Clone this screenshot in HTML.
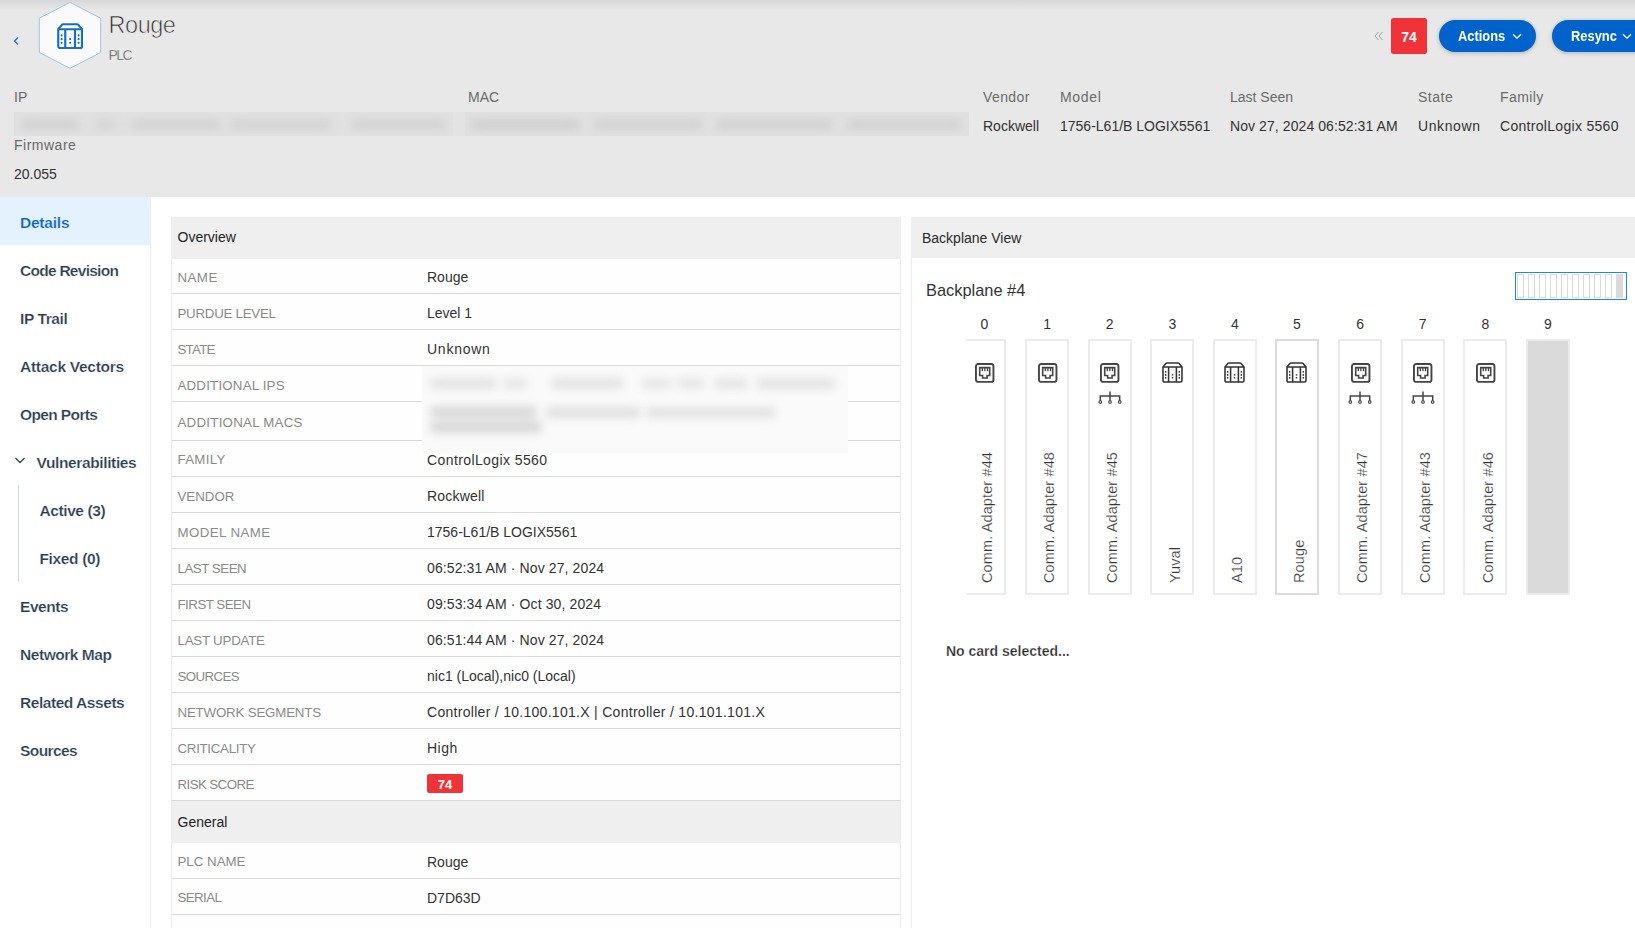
<!DOCTYPE html>
<html><head><meta charset="utf-8"><title>Rouge - PLC</title>
<style>
html,body{margin:0;padding:0;}
body{width:1635px;height:928px;overflow:hidden;position:relative;background:#fff;font-family:"Liberation Sans", sans-serif;}
.t{position:absolute;white-space:nowrap;}
</style></head><body>
<div style="position:absolute;left:0px;top:0px;width:1635px;height:197px;background:#e8e8e8"></div>
<div style="position:absolute;left:0px;top:0px;width:1635px;height:10px;background:linear-gradient(#d7d7d7,#e8e8e8)"></div>
<svg style="position:absolute;left:12px;top:35px" width="10" height="12" viewBox="0 0 10 12"><path d="M6 2.5 L2.5 6 L6 9.5" fill="none" stroke="#2a6fc9" stroke-width="1.4"/></svg>
<svg style="position:absolute;left:38px;top:1px" width="64" height="69" viewBox="0 0 64 69">
<polygon points="32,1.4 62.7,17.2 62.7,51.5 32,67.3 1.3,51.5 1.3,17.2" fill="#fafafa" stroke="#9fc4e2" stroke-width="1"/>
</svg>
<svg style="position:absolute;left:56.9px;top:22.8px" width="26.25" height="26.25" viewBox="0 0 21 21">
<g fill="none" stroke="#1a6ec0" stroke-width="1.75" stroke-linejoin="round">
<path d="M1 5 L3.9 1.5 Q4.3 1 5 1 L16 1 Q16.7 1 17.1 1.5 L20 5 L20 18.6 Q20 20 18.6 20 L2.4 20 Q1 20 1 18.6 Z"/>
<path d="M1 5 H20 M6.6 5 V20 M14.4 5 V20"/>
</g>
<g fill="#1a6ec0">
<circle cx="3.7" cy="9.85" r="0.85"/><circle cx="3.7" cy="12.9" r="0.85"/><circle cx="3.7" cy="15.85" r="0.85"/>
<circle cx="17.3" cy="9.85" r="0.85"/><circle cx="17.3" cy="12.9" r="0.85"/><circle cx="17.3" cy="15.85" r="0.85"/>
<rect x="9.75" y="12.2" width="1.5" height="1.4"/><rect x="9.75" y="15.15" width="1.5" height="1.4"/>
</g></svg>
<div class="t" style="left:108.6px;top:14.0px;font-size:23.5px;line-height:23.5px;color:#2e2e2e;font-weight:400;letter-spacing:-0.5px;-webkit-text-stroke:0.7px #e8e8e8">Rouge</div>
<div class="t" style="left:108.5px;top:48.1px;font-size:14px;line-height:14px;color:#555;font-weight:400;letter-spacing:-1.5px;-webkit-text-stroke:0.3px #e8e8e8">PLC</div>
<svg style="position:absolute;left:1374px;top:31px" width="10" height="10" viewBox="0 0 10 10"><path d="M4.5 1 L1 5 L4.5 9 M8.5 1 L5 5 L8.5 9" fill="none" stroke="#a0a0a0" stroke-width="1"/></svg>
<div style="position:absolute;left:1391px;top:18px;width:36px;height:36px;background:#ef3339;border-radius:2.5px"></div>
<div class="t" style="left:1391px;top:29.9px;font-size:14px;line-height:14px;color:#fff;font-weight:700;width:36px;text-align:center">74</div>
<div style="position:absolute;left:1439px;top:20px;width:97px;height:32px;background:#0063cb;border-radius:16px;box-shadow:0 1px 4px rgba(0,0,0,0.25)"></div>
<div class="t" style="left:1457.6px;top:28.8px;font-size:14px;line-height:14px;color:#fff;font-weight:700;transform:scaleX(0.92);transform-origin:0 0">Actions</div>
<svg style="position:absolute;left:1512px;top:33px" width="10" height="7" viewBox="0 0 10 7"><path d="M1 1.2 L5 5.2 L9 1.2" fill="none" stroke="#fff" stroke-width="1.3"/></svg>
<div style="position:absolute;left:1552px;top:20px;width:97px;height:32px;background:#0063cb;border-radius:16px;box-shadow:0 1px 4px rgba(0,0,0,0.25)"></div>
<div class="t" style="left:1570.6px;top:28.8px;font-size:14px;line-height:14px;color:#fff;font-weight:700;transform:scaleX(0.92);transform-origin:0 0">Resync</div>
<svg style="position:absolute;left:1622px;top:33px" width="10" height="7" viewBox="0 0 10 7"><path d="M1 1.2 L5 5.2 L9 1.2" fill="none" stroke="#fff" stroke-width="1.3"/></svg>
<div class="t" style="left:14px;top:90.1px;font-size:14px;line-height:14px;color:#6b6b6b;font-weight:400;letter-spacing:0px">IP</div>
<div class="t" style="left:468px;top:90.1px;font-size:14px;line-height:14px;color:#6b6b6b;font-weight:400;letter-spacing:0px">MAC</div>
<div class="t" style="left:983px;top:90.1px;font-size:14px;line-height:14px;color:#6b6b6b;font-weight:400;letter-spacing:0.4px">Vendor</div>
<div class="t" style="left:1060px;top:90.1px;font-size:14px;line-height:14px;color:#6b6b6b;font-weight:400;letter-spacing:0.7px">Model</div>
<div class="t" style="left:1230px;top:90.1px;font-size:14px;line-height:14px;color:#6b6b6b;font-weight:400;letter-spacing:0px">Last Seen</div>
<div class="t" style="left:1418px;top:90.1px;font-size:14px;line-height:14px;color:#6b6b6b;font-weight:400;letter-spacing:0.5px">State</div>
<div class="t" style="left:1500px;top:90.1px;font-size:14px;line-height:14px;color:#6b6b6b;font-weight:400;letter-spacing:0.4px">Family</div>
<div class="t" style="left:983px;top:118.6px;font-size:14px;line-height:14px;color:#333;font-weight:400;">Rockwell</div>
<div class="t" style="left:1060px;top:118.6px;font-size:14px;line-height:14px;color:#333;font-weight:400;">1756-L61/B LOGIX5561</div>
<div class="t" style="left:1230px;top:118.6px;font-size:14px;line-height:14px;color:#333;font-weight:400;letter-spacing:0.08px">Nov 27, 2024 06:52:31 AM</div>
<div class="t" style="left:1418px;top:118.6px;font-size:14px;line-height:14px;color:#333;font-weight:400;letter-spacing:0.6px">Unknown</div>
<div class="t" style="left:1500px;top:118.6px;font-size:14px;line-height:14px;color:#333;font-weight:400;letter-spacing:0.3px">ControlLogix 5560</div>
<div class="t" style="left:14px;top:138.3px;font-size:14px;line-height:14px;color:#6b6b6b;font-weight:400;letter-spacing:0.5px">Firmware</div>
<div class="t" style="left:14px;top:167.1px;font-size:14px;line-height:14px;color:#333;font-weight:400;">20.055</div>
<div style="position:absolute;left:14px;top:112px;width:439px;height:24px;background:#e1e1e1;overflow:hidden"><div style="position:absolute;inset:0;filter:blur(4.5px)"><span style="position:absolute;left:7px;top:7px;width:58px;height:11px;background:#d1d1d1;border-radius:5px"></span><span style="position:absolute;left:81px;top:7px;width:21px;height:11px;background:#d6d6d6;border-radius:5px"></span><span style="position:absolute;left:118px;top:7px;width:89px;height:11px;background:#d3d3d3;border-radius:5px"></span><span style="position:absolute;left:216px;top:7px;width:101px;height:11px;background:#d4d4d4;border-radius:5px"></span><span style="position:absolute;left:338px;top:7px;width:94px;height:11px;background:#d3d3d3;border-radius:5px"></span></div></div>
<div style="position:absolute;left:453px;top:112px;width:12px;height:24px;background:#e3e3e3"></div>
<div style="position:absolute;left:465px;top:112px;width:504px;height:24px;background:#e1e1e1;overflow:hidden"><div style="position:absolute;inset:0;filter:blur(4.5px)"><span style="position:absolute;left:5px;top:7px;width:110px;height:11px;background:#d0d0d0;border-radius:5px"></span><span style="position:absolute;left:129px;top:7px;width:109px;height:11px;background:#d2d2d2;border-radius:5px"></span><span style="position:absolute;left:251px;top:7px;width:117px;height:11px;background:#d1d1d1;border-radius:5px"></span><span style="position:absolute;left:381px;top:7px;width:116px;height:11px;background:#d2d2d2;border-radius:5px"></span></div></div>
<div style="position:absolute;left:150px;top:197px;width:1px;height:731px;background:#eeeeee"></div>
<div style="position:absolute;left:0px;top:197px;width:150px;height:48px;background:#e4f2fd"></div>
<div class="t" style="left:20px;top:215.1px;font-size:15.5px;line-height:15.5px;color:#0a62c9;font-weight:700;letter-spacing:-0.22px;-webkit-text-stroke:0.2px #e4f2fd">Details</div>
<div class="t" style="left:20px;top:262.8px;font-size:15.5px;line-height:15.5px;color:#2b3d50;font-weight:700;-webkit-text-stroke:0.2px #fff;letter-spacing:-0.73px">Code Revision</div>
<div class="t" style="left:20px;top:310.8px;font-size:15.5px;line-height:15.5px;color:#2b3d50;font-weight:700;-webkit-text-stroke:0.2px #fff;letter-spacing:-0.4px">IP Trail</div>
<div class="t" style="left:20px;top:358.8px;font-size:15.5px;line-height:15.5px;color:#2b3d50;font-weight:700;-webkit-text-stroke:0.2px #fff;letter-spacing:-0.27px">Attack Vectors</div>
<div class="t" style="left:20px;top:406.8px;font-size:15.5px;line-height:15.5px;color:#2b3d50;font-weight:700;-webkit-text-stroke:0.2px #fff;letter-spacing:-0.62px">Open Ports</div>
<svg style="position:absolute;left:14px;top:456px" width="12" height="9" viewBox="0 0 12 9"><path d="M1.5 2 L6 6.5 L10.5 2" fill="none" stroke="#33455a" stroke-width="1.4"/></svg>
<div class="t" style="left:36.5px;top:454.5px;font-size:15.5px;line-height:15.5px;color:#2b3d50;font-weight:700;-webkit-text-stroke:0.2px #fff;letter-spacing:-0.37px">Vulnerabilities</div>
<div style="position:absolute;left:18px;top:485px;width:1px;height:96px;background:#c8d6e3"></div>
<div class="t" style="left:39.5px;top:502.9px;font-size:15.5px;line-height:15.5px;color:#2b3d50;font-weight:700;-webkit-text-stroke:0.2px #fff;letter-spacing:-0.41px">Active (3)</div>
<div class="t" style="left:39.5px;top:550.9px;font-size:15.5px;line-height:15.5px;color:#2b3d50;font-weight:700;-webkit-text-stroke:0.2px #fff;letter-spacing:-0.36px">Fixed (0)</div>
<div class="t" style="left:20px;top:598.8px;font-size:15.5px;line-height:15.5px;color:#2b3d50;font-weight:700;-webkit-text-stroke:0.2px #fff;letter-spacing:-0.44px">Events</div>
<div class="t" style="left:20px;top:646.8px;font-size:15.5px;line-height:15.5px;color:#2b3d50;font-weight:700;-webkit-text-stroke:0.2px #fff;letter-spacing:-0.45px">Network Map</div>
<div class="t" style="left:20px;top:694.8px;font-size:15.5px;line-height:15.5px;color:#2b3d50;font-weight:700;-webkit-text-stroke:0.2px #fff;letter-spacing:-0.45px">Related Assets</div>
<div class="t" style="left:20px;top:742.8px;font-size:15.5px;line-height:15.5px;color:#2b3d50;font-weight:700;-webkit-text-stroke:0.2px #fff;letter-spacing:-0.58px">Sources</div>
<div style="position:absolute;left:171px;top:217px;width:730px;height:711px;background:#fefefe;border-left:1px solid #ebebeb;border-right:1px solid #ebebeb;box-sizing:border-box"></div>
<div style="position:absolute;left:171px;top:217px;width:730px;height:42px;background:#efefef"></div>
<div class="t" style="left:177.5px;top:230.1px;font-size:14px;line-height:14px;color:#222;font-weight:400;">Overview</div>
<div class="t" style="left:177.5px;top:270.7px;font-size:13.3px;line-height:13.3px;color:#8a8a8a;font-weight:400;letter-spacing:0.45px">NAME</div>
<div class="t" style="left:427px;top:270.1px;font-size:14px;line-height:14px;color:#333;font-weight:400;letter-spacing:0px">Rouge</div>
<div class="t" style="left:177.5px;top:306.7px;font-size:13.3px;line-height:13.3px;color:#8a8a8a;font-weight:400;letter-spacing:-0.25px">PURDUE LEVEL</div>
<div class="t" style="left:427px;top:306.1px;font-size:14px;line-height:14px;color:#333;font-weight:400;letter-spacing:0px">Level 1</div>
<div class="t" style="left:177.5px;top:342.7px;font-size:13.3px;line-height:13.3px;color:#8a8a8a;font-weight:400;letter-spacing:-0.75px">STATE</div>
<div class="t" style="left:427px;top:342.1px;font-size:14px;line-height:14px;color:#333;font-weight:400;letter-spacing:0.75px">Unknown</div>
<div class="t" style="left:177.5px;top:378.7px;font-size:13.3px;line-height:13.3px;color:#8a8a8a;font-weight:400;letter-spacing:0.2px">ADDITIONAL IPS</div>
<div class="t" style="left:177.5px;top:415.5px;font-size:13.3px;line-height:13.3px;color:#8a8a8a;font-weight:400;letter-spacing:0.25px">ADDITIONAL MACS</div>
<div class="t" style="left:177.5px;top:453.2px;font-size:13.3px;line-height:13.3px;color:#8a8a8a;font-weight:400;letter-spacing:0.3px">FAMILY</div>
<div class="t" style="left:427px;top:452.6px;font-size:14px;line-height:14px;color:#333;font-weight:400;letter-spacing:0.4px">ControlLogix 5560</div>
<div class="t" style="left:177.5px;top:489.7px;font-size:13.3px;line-height:13.3px;color:#8a8a8a;font-weight:400;letter-spacing:0px">VENDOR</div>
<div class="t" style="left:427px;top:489.1px;font-size:14px;line-height:14px;color:#333;font-weight:400;letter-spacing:0.2px">Rockwell</div>
<div class="t" style="left:177.5px;top:525.7px;font-size:13.3px;line-height:13.3px;color:#8a8a8a;font-weight:400;letter-spacing:0.4px">MODEL NAME</div>
<div class="t" style="left:427px;top:525.1px;font-size:14px;line-height:14px;color:#333;font-weight:400;letter-spacing:0px">1756-L61/B LOGIX5561</div>
<div class="t" style="left:177.5px;top:561.7px;font-size:13.3px;line-height:13.3px;color:#8a8a8a;font-weight:400;letter-spacing:-0.47px">LAST SEEN</div>
<div class="t" style="left:427px;top:561.1px;font-size:14px;line-height:14px;color:#333;font-weight:400;letter-spacing:0.11px">06:52:31 AM · Nov 27, 2024</div>
<div class="t" style="left:177.5px;top:597.7px;font-size:13.3px;line-height:13.3px;color:#8a8a8a;font-weight:400;letter-spacing:-0.5px">FIRST SEEN</div>
<div class="t" style="left:427px;top:597.1px;font-size:14px;line-height:14px;color:#333;font-weight:400;letter-spacing:0.11px">09:53:34 AM · Oct 30, 2024</div>
<div class="t" style="left:177.5px;top:633.7px;font-size:13.3px;line-height:13.3px;color:#8a8a8a;font-weight:400;letter-spacing:-0.22px">LAST UPDATE</div>
<div class="t" style="left:427px;top:633.1px;font-size:14px;line-height:14px;color:#333;font-weight:400;letter-spacing:0.11px">06:51:44 AM · Nov 27, 2024</div>
<div class="t" style="left:177.5px;top:669.7px;font-size:13.3px;line-height:13.3px;color:#8a8a8a;font-weight:400;letter-spacing:-0.6px">SOURCES</div>
<div class="t" style="left:427px;top:669.1px;font-size:14px;line-height:14px;color:#333;font-weight:400;letter-spacing:0px">nic1 (Local),nic0 (Local)</div>
<div class="t" style="left:177.5px;top:705.7px;font-size:13.3px;line-height:13.3px;color:#8a8a8a;font-weight:400;letter-spacing:-0.18px">NETWORK SEGMENTS</div>
<div class="t" style="left:427px;top:705.1px;font-size:14px;line-height:14px;color:#333;font-weight:400;letter-spacing:0.29px">Controller / 10.100.101.X | Controller / 10.101.101.X</div>
<div class="t" style="left:177.5px;top:741.7px;font-size:13.3px;line-height:13.3px;color:#8a8a8a;font-weight:400;letter-spacing:-0.29px">CRITICALITY</div>
<div class="t" style="left:427px;top:741.1px;font-size:14px;line-height:14px;color:#333;font-weight:400;letter-spacing:0.5px">High</div>
<div class="t" style="left:177.5px;top:777.7px;font-size:13.3px;line-height:13.3px;color:#8a8a8a;font-weight:400;letter-spacing:-0.58px">RISK SCORE</div>
<div style="position:absolute;left:427px;top:774px;width:36px;height:19px;background:#ef3339;border-radius:2px"></div>
<div class="t" style="left:427px;top:777.5px;font-size:13px;line-height:13px;color:#fff;font-weight:700;width:36px;text-align:center">74</div>
<div style="position:absolute;left:172px;top:293px;width:728px;height:1px;background:#dadada"></div>
<div style="position:absolute;left:172px;top:329px;width:728px;height:1px;background:#dadada"></div>
<div style="position:absolute;left:172px;top:365px;width:728px;height:1px;background:#dadada"></div>
<div style="position:absolute;left:172px;top:401px;width:728px;height:1px;background:#dadada"></div>
<div style="position:absolute;left:172px;top:440px;width:728px;height:1px;background:#dadada"></div>
<div style="position:absolute;left:172px;top:476px;width:728px;height:1px;background:#dadada"></div>
<div style="position:absolute;left:172px;top:512px;width:728px;height:1px;background:#dadada"></div>
<div style="position:absolute;left:172px;top:548px;width:728px;height:1px;background:#dadada"></div>
<div style="position:absolute;left:172px;top:584px;width:728px;height:1px;background:#dadada"></div>
<div style="position:absolute;left:172px;top:620px;width:728px;height:1px;background:#dadada"></div>
<div style="position:absolute;left:172px;top:656px;width:728px;height:1px;background:#dadada"></div>
<div style="position:absolute;left:172px;top:692px;width:728px;height:1px;background:#dadada"></div>
<div style="position:absolute;left:172px;top:728px;width:728px;height:1px;background:#dadada"></div>
<div style="position:absolute;left:172px;top:764px;width:728px;height:1px;background:#dadada"></div>
<div style="position:absolute;left:172px;top:800px;width:728px;height:1px;background:#dadada"></div>
<div style="position:absolute;left:172px;top:878px;width:728px;height:1px;background:#dadada"></div>
<div style="position:absolute;left:172px;top:914px;width:728px;height:1px;background:#dadada"></div>
<div style="position:absolute;left:172px;top:801px;width:728px;height:42px;background:#efefef"></div>
<div class="t" style="left:177.5px;top:815.1px;font-size:14px;line-height:14px;color:#222;font-weight:400;">General</div>
<div class="t" style="left:177.5px;top:855.3px;font-size:13.3px;line-height:13.3px;color:#8a8a8a;font-weight:400;letter-spacing:0px">PLC NAME</div>
<div class="t" style="left:427px;top:854.7px;font-size:14px;line-height:14px;color:#333;font-weight:400;">Rouge</div>
<div class="t" style="left:177.5px;top:891.4px;font-size:13.3px;line-height:13.3px;color:#8a8a8a;font-weight:400;letter-spacing:-0.6px">SERIAL</div>
<div class="t" style="left:427px;top:890.8px;font-size:14px;line-height:14px;color:#333;font-weight:400;">D7D63D</div>
<div style="position:absolute;left:422px;top:366px;width:426px;height:87px;background:#fafafa;overflow:hidden"><div style="position:absolute;inset:0;filter:blur(4px)"><span style="position:absolute;left:8px;top:12px;width:67px;height:11px;background:#e3e3e3;border-radius:5px"></span><span style="position:absolute;left:81px;top:12px;width:25px;height:11px;background:#e6e6e6;border-radius:5px"></span><span style="position:absolute;left:129px;top:12px;width:73px;height:11px;background:#e3e3e3;border-radius:5px"></span><span style="position:absolute;left:219px;top:12px;width:31px;height:11px;background:#e6e6e6;border-radius:5px"></span><span style="position:absolute;left:255px;top:12px;width:28px;height:11px;background:#e6e6e6;border-radius:5px"></span><span style="position:absolute;left:292px;top:12px;width:34px;height:11px;background:#e5e5e5;border-radius:5px"></span><span style="position:absolute;left:334px;top:12px;width:79px;height:11px;background:#e3e3e3;border-radius:5px"></span><span style="position:absolute;left:8px;top:40px;width:107px;height:12px;background:#d9d9d9;border-radius:5px"></span><span style="position:absolute;left:123px;top:41px;width:96px;height:11px;background:#e0e0e0;border-radius:5px"></span><span style="position:absolute;left:224px;top:41px;width:130px;height:11px;background:#e2e2e2;border-radius:5px"></span><span style="position:absolute;left:8px;top:55px;width:112px;height:12px;background:#d8d8d8;border-radius:5px"></span></div></div>
<div style="position:absolute;left:911px;top:217px;width:724px;height:711px;background:#fff;border-left:1px solid #ececec"></div>
<div style="position:absolute;left:911px;top:217px;width:724px;height:41px;background:#efefef"></div>
<div class="t" style="left:922px;top:230.8px;font-size:14px;line-height:14px;color:#2a2a2a;font-weight:400;">Backplane View</div>
<div class="t" style="left:926px;top:281.6px;font-size:16.4px;line-height:16.4px;color:#333;font-weight:400;">Backplane #4</div>
<div style="position:absolute;left:1515px;top:272px;width:112px;height:28px;box-sizing:border-box;border:1.5px solid #1e88d8;background:#fff"></div>
<div style="position:absolute;left:1517.3px;top:274.2px;width:7px;height:23.5px;border:1px solid #dadada;box-sizing:border-box"></div>
<div style="position:absolute;left:1528.25px;top:274.2px;width:7px;height:23.5px;border:1px solid #dadada;box-sizing:border-box"></div>
<div style="position:absolute;left:1539.2px;top:274.2px;width:7px;height:23.5px;border:1px solid #dadada;box-sizing:border-box"></div>
<div style="position:absolute;left:1550.1499999999999px;top:274.2px;width:7px;height:23.5px;border:1px solid #dadada;box-sizing:border-box"></div>
<div style="position:absolute;left:1561.1px;top:274.2px;width:7px;height:23.5px;border:1px solid #dadada;box-sizing:border-box"></div>
<div style="position:absolute;left:1572.05px;top:274.2px;width:7px;height:23.5px;border:1px solid #dadada;box-sizing:border-box"></div>
<div style="position:absolute;left:1583.0px;top:274.2px;width:7px;height:23.5px;border:1px solid #dadada;box-sizing:border-box"></div>
<div style="position:absolute;left:1593.95px;top:274.2px;width:7px;height:23.5px;border:1px solid #dadada;box-sizing:border-box"></div>
<div style="position:absolute;left:1604.8999999999999px;top:274.2px;width:7px;height:23.5px;border:1px solid #dadada;box-sizing:border-box"></div>
<div style="position:absolute;left:1615.85px;top:274.2px;width:7px;height:23.5px;background:#dadada"></div>
<div style="position:absolute;left:966px;top:300px;width:640px;height:320px;overflow:hidden">
<div class="t" style="left:8.5px;top:17.1px;width:20px;text-align:center;font-size:14px;line-height:14px;color:#333">0</div>
<div style="position:absolute;left:-4.5px;top:39px;width:44px;height:256px;background:#fff;border:2px solid #ececec;box-sizing:border-box"></div>
<svg style="position:absolute;left:8.9px;top:63.19999999999999px" width="20" height="20" viewBox="0 0 20 20"><g fill="none" stroke="#444" stroke-width="1.9" stroke-linejoin="round">
<rect x="0.95" y="0.95" width="17.5" height="17.9" rx="2.2"/></g>
<g fill="none" stroke="#444" stroke-width="1.6" stroke-linejoin="miter">
<path d="M4.7 4.65 H14.7 V12.45 H12.1 V15.05 H7.6 V12.45 H4.7 Z"/></g>
<g stroke="#444" stroke-width="1.3"><path d="M7.3 4.6 V8.2 M9.9 4.6 V8.2 M12.5 4.6 V8.2"/></g></svg>
<div class="t" style="left:25.7px;top:283.0px;font-size:14.5px;line-height:14.5px;color:#333;letter-spacing:0.12px;-webkit-text-stroke:0.2px #fff;transform-origin:0 0;transform:rotate(-90deg) translate(0,-12.27px)">Comm. Adapter #44</div>
<div class="t" style="left:71.1px;top:17.1px;width:20px;text-align:center;font-size:14px;line-height:14px;color:#333">1</div>
<div style="position:absolute;left:59.1px;top:39px;width:44px;height:256px;background:#fff;border:2px solid #ececec;box-sizing:border-box"></div>
<svg style="position:absolute;left:71.5px;top:63.19999999999999px" width="20" height="20" viewBox="0 0 20 20"><g fill="none" stroke="#444" stroke-width="1.9" stroke-linejoin="round">
<rect x="0.95" y="0.95" width="17.5" height="17.9" rx="2.2"/></g>
<g fill="none" stroke="#444" stroke-width="1.6" stroke-linejoin="miter">
<path d="M4.7 4.65 H14.7 V12.45 H12.1 V15.05 H7.6 V12.45 H4.7 Z"/></g>
<g stroke="#444" stroke-width="1.3"><path d="M7.3 4.6 V8.2 M9.9 4.6 V8.2 M12.5 4.6 V8.2"/></g></svg>
<div class="t" style="left:88.3px;top:283.0px;font-size:14.5px;line-height:14.5px;color:#333;letter-spacing:0.12px;-webkit-text-stroke:0.2px #fff;transform-origin:0 0;transform:rotate(-90deg) translate(0,-12.27px)">Comm. Adapter #48</div>
<div class="t" style="left:133.7px;top:17.1px;width:20px;text-align:center;font-size:14px;line-height:14px;color:#333">2</div>
<div style="position:absolute;left:121.7px;top:39px;width:44px;height:256px;background:#fff;border:2px solid #ececec;box-sizing:border-box"></div>
<svg style="position:absolute;left:134.1px;top:63.19999999999999px" width="20" height="20" viewBox="0 0 20 20"><g fill="none" stroke="#444" stroke-width="1.9" stroke-linejoin="round">
<rect x="0.95" y="0.95" width="17.5" height="17.9" rx="2.2"/></g>
<g fill="none" stroke="#444" stroke-width="1.6" stroke-linejoin="miter">
<path d="M4.7 4.65 H14.7 V12.45 H12.1 V15.05 H7.6 V12.45 H4.7 Z"/></g>
<g stroke="#444" stroke-width="1.3"><path d="M7.3 4.6 V8.2 M9.9 4.6 V8.2 M12.5 4.6 V8.2"/></g></svg>
<svg style="position:absolute;left:131.7px;top:90.80000000000001px" width="24" height="14" viewBox="0 0 24 14"><g fill="none" stroke="#444" stroke-width="1.5">
<path d="M12 0.5 V9.6 M2.3 9.6 V5 H21.7 V9.6"/></g><g fill="#fff" stroke="#444" stroke-width="1.1">
<circle cx="2.3" cy="10.9" r="1.3"/><circle cx="12" cy="10.9" r="1.3"/><circle cx="21.7" cy="10.9" r="1.3"/></g></svg>
<div class="t" style="left:150.9px;top:283.0px;font-size:14.5px;line-height:14.5px;color:#333;letter-spacing:0.12px;-webkit-text-stroke:0.2px #fff;transform-origin:0 0;transform:rotate(-90deg) translate(0,-12.27px)">Comm. Adapter #45</div>
<div class="t" style="left:196.3px;top:17.1px;width:20px;text-align:center;font-size:14px;line-height:14px;color:#333">3</div>
<div style="position:absolute;left:184.3px;top:39px;width:44px;height:256px;background:#fff;border:2px solid #ececec;box-sizing:border-box"></div>
<svg style="position:absolute;left:195.5px;top:62.30000000000001px" width="21.00" height="21.00" viewBox="0 0 21 21">
<g fill="none" stroke="#333" stroke-width="1.55" stroke-linejoin="round">
<path d="M1 5 L3.9 1.5 Q4.3 1 5 1 L16 1 Q16.7 1 17.1 1.5 L20 5 L20 18.6 Q20 20 18.6 20 L2.4 20 Q1 20 1 18.6 Z"/>
<path d="M1 5 H20 M6.6 5 V20 M14.4 5 V20"/>
</g>
<g fill="#333">
<circle cx="3.7" cy="9.85" r="0.85"/><circle cx="3.7" cy="12.9" r="0.85"/><circle cx="3.7" cy="15.85" r="0.85"/>
<circle cx="17.3" cy="9.85" r="0.85"/><circle cx="17.3" cy="12.9" r="0.85"/><circle cx="17.3" cy="15.85" r="0.85"/>
<rect x="9.75" y="12.2" width="1.5" height="1.4"/><rect x="9.75" y="15.15" width="1.5" height="1.4"/>
</g></svg>
<div class="t" style="left:213.5px;top:283.0px;font-size:14.5px;line-height:14.5px;color:#333;letter-spacing:0.12px;-webkit-text-stroke:0.2px #fff;transform-origin:0 0;transform:rotate(-90deg) translate(0,-12.27px)">Yuval</div>
<div class="t" style="left:258.9px;top:17.1px;width:20px;text-align:center;font-size:14px;line-height:14px;color:#333">4</div>
<div style="position:absolute;left:246.9px;top:39px;width:44px;height:256px;background:#fff;border:2px solid #ececec;box-sizing:border-box"></div>
<svg style="position:absolute;left:258.1px;top:62.30000000000001px" width="21.00" height="21.00" viewBox="0 0 21 21">
<g fill="none" stroke="#333" stroke-width="1.55" stroke-linejoin="round">
<path d="M1 5 L3.9 1.5 Q4.3 1 5 1 L16 1 Q16.7 1 17.1 1.5 L20 5 L20 18.6 Q20 20 18.6 20 L2.4 20 Q1 20 1 18.6 Z"/>
<path d="M1 5 H20 M6.6 5 V20 M14.4 5 V20"/>
</g>
<g fill="#333">
<circle cx="3.7" cy="9.85" r="0.85"/><circle cx="3.7" cy="12.9" r="0.85"/><circle cx="3.7" cy="15.85" r="0.85"/>
<circle cx="17.3" cy="9.85" r="0.85"/><circle cx="17.3" cy="12.9" r="0.85"/><circle cx="17.3" cy="15.85" r="0.85"/>
<rect x="9.75" y="12.2" width="1.5" height="1.4"/><rect x="9.75" y="15.15" width="1.5" height="1.4"/>
</g></svg>
<div class="t" style="left:276.1px;top:283.0px;font-size:14.5px;line-height:14.5px;color:#333;letter-spacing:0.12px;-webkit-text-stroke:0.2px #fff;transform-origin:0 0;transform:rotate(-90deg) translate(0,-12.27px)">A10</div>
<div class="t" style="left:321.0px;top:17.1px;width:20px;text-align:center;font-size:14px;line-height:14px;color:#333">5</div>
<div style="position:absolute;left:308.5px;top:39px;width:44px;height:256px;background:#fff;border:2px solid #dcdcdc;box-sizing:border-box"></div>
<svg style="position:absolute;left:320.2px;top:62.30000000000001px" width="21.00" height="21.00" viewBox="0 0 21 21">
<g fill="none" stroke="#333" stroke-width="1.55" stroke-linejoin="round">
<path d="M1 5 L3.9 1.5 Q4.3 1 5 1 L16 1 Q16.7 1 17.1 1.5 L20 5 L20 18.6 Q20 20 18.6 20 L2.4 20 Q1 20 1 18.6 Z"/>
<path d="M1 5 H20 M6.6 5 V20 M14.4 5 V20"/>
</g>
<g fill="#333">
<circle cx="3.7" cy="9.85" r="0.85"/><circle cx="3.7" cy="12.9" r="0.85"/><circle cx="3.7" cy="15.85" r="0.85"/>
<circle cx="17.3" cy="9.85" r="0.85"/><circle cx="17.3" cy="12.9" r="0.85"/><circle cx="17.3" cy="15.85" r="0.85"/>
<rect x="9.75" y="12.2" width="1.5" height="1.4"/><rect x="9.75" y="15.15" width="1.5" height="1.4"/>
</g></svg>
<div class="t" style="left:338.2px;top:283.0px;font-size:14.5px;line-height:14.5px;color:#333;letter-spacing:0.12px;-webkit-text-stroke:0.2px #fff;transform-origin:0 0;transform:rotate(-90deg) translate(0,-12.27px)">Rouge</div>
<div class="t" style="left:384.1px;top:17.1px;width:20px;text-align:center;font-size:14px;line-height:14px;color:#333">6</div>
<div style="position:absolute;left:372.1px;top:39px;width:44px;height:256px;background:#fff;border:2px solid #ececec;box-sizing:border-box"></div>
<svg style="position:absolute;left:384.5px;top:63.19999999999999px" width="20" height="20" viewBox="0 0 20 20"><g fill="none" stroke="#444" stroke-width="1.9" stroke-linejoin="round">
<rect x="0.95" y="0.95" width="17.5" height="17.9" rx="2.2"/></g>
<g fill="none" stroke="#444" stroke-width="1.6" stroke-linejoin="miter">
<path d="M4.7 4.65 H14.7 V12.45 H12.1 V15.05 H7.6 V12.45 H4.7 Z"/></g>
<g stroke="#444" stroke-width="1.3"><path d="M7.3 4.6 V8.2 M9.9 4.6 V8.2 M12.5 4.6 V8.2"/></g></svg>
<svg style="position:absolute;left:382.1px;top:90.80000000000001px" width="24" height="14" viewBox="0 0 24 14"><g fill="none" stroke="#444" stroke-width="1.5">
<path d="M12 0.5 V9.6 M2.3 9.6 V5 H21.7 V9.6"/></g><g fill="#fff" stroke="#444" stroke-width="1.1">
<circle cx="2.3" cy="10.9" r="1.3"/><circle cx="12" cy="10.9" r="1.3"/><circle cx="21.7" cy="10.9" r="1.3"/></g></svg>
<div class="t" style="left:401.3px;top:283.0px;font-size:14.5px;line-height:14.5px;color:#333;letter-spacing:0.12px;-webkit-text-stroke:0.2px #fff;transform-origin:0 0;transform:rotate(-90deg) translate(0,-12.27px)">Comm. Adapter #47</div>
<div class="t" style="left:446.7px;top:17.1px;width:20px;text-align:center;font-size:14px;line-height:14px;color:#333">7</div>
<div style="position:absolute;left:434.7px;top:39px;width:44px;height:256px;background:#fff;border:2px solid #ececec;box-sizing:border-box"></div>
<svg style="position:absolute;left:447.1px;top:63.19999999999999px" width="20" height="20" viewBox="0 0 20 20"><g fill="none" stroke="#444" stroke-width="1.9" stroke-linejoin="round">
<rect x="0.95" y="0.95" width="17.5" height="17.9" rx="2.2"/></g>
<g fill="none" stroke="#444" stroke-width="1.6" stroke-linejoin="miter">
<path d="M4.7 4.65 H14.7 V12.45 H12.1 V15.05 H7.6 V12.45 H4.7 Z"/></g>
<g stroke="#444" stroke-width="1.3"><path d="M7.3 4.6 V8.2 M9.9 4.6 V8.2 M12.5 4.6 V8.2"/></g></svg>
<svg style="position:absolute;left:444.7px;top:90.80000000000001px" width="24" height="14" viewBox="0 0 24 14"><g fill="none" stroke="#444" stroke-width="1.5">
<path d="M12 0.5 V9.6 M2.3 9.6 V5 H21.7 V9.6"/></g><g fill="#fff" stroke="#444" stroke-width="1.1">
<circle cx="2.3" cy="10.9" r="1.3"/><circle cx="12" cy="10.9" r="1.3"/><circle cx="21.7" cy="10.9" r="1.3"/></g></svg>
<div class="t" style="left:463.9px;top:283.0px;font-size:14.5px;line-height:14.5px;color:#333;letter-spacing:0.12px;-webkit-text-stroke:0.2px #fff;transform-origin:0 0;transform:rotate(-90deg) translate(0,-12.27px)">Comm. Adapter #43</div>
<div class="t" style="left:509.3px;top:17.1px;width:20px;text-align:center;font-size:14px;line-height:14px;color:#333">8</div>
<div style="position:absolute;left:497.3px;top:39px;width:44px;height:256px;background:#fff;border:2px solid #ececec;box-sizing:border-box"></div>
<svg style="position:absolute;left:509.7px;top:63.19999999999999px" width="20" height="20" viewBox="0 0 20 20"><g fill="none" stroke="#444" stroke-width="1.9" stroke-linejoin="round">
<rect x="0.95" y="0.95" width="17.5" height="17.9" rx="2.2"/></g>
<g fill="none" stroke="#444" stroke-width="1.6" stroke-linejoin="miter">
<path d="M4.7 4.65 H14.7 V12.45 H12.1 V15.05 H7.6 V12.45 H4.7 Z"/></g>
<g stroke="#444" stroke-width="1.3"><path d="M7.3 4.6 V8.2 M9.9 4.6 V8.2 M12.5 4.6 V8.2"/></g></svg>
<div class="t" style="left:526.5px;top:283.0px;font-size:14.5px;line-height:14.5px;color:#333;letter-spacing:0.12px;-webkit-text-stroke:0.2px #fff;transform-origin:0 0;transform:rotate(-90deg) translate(0,-12.27px)">Comm. Adapter #46</div>
<div class="t" style="left:571.9px;top:17.1px;width:20px;text-align:center;font-size:14px;line-height:14px;color:#333">9</div>
<div style="position:absolute;left:559.9px;top:39px;width:44px;height:256px;background:#dadada;border:2px solid #ececec;box-sizing:border-box"></div>
</div>
<div class="t" style="left:946px;top:644.1px;font-size:14px;line-height:14px;color:#2a2a2a;font-weight:700;-webkit-text-stroke:0.25px #fff">No card selected...</div>
</body></html>
